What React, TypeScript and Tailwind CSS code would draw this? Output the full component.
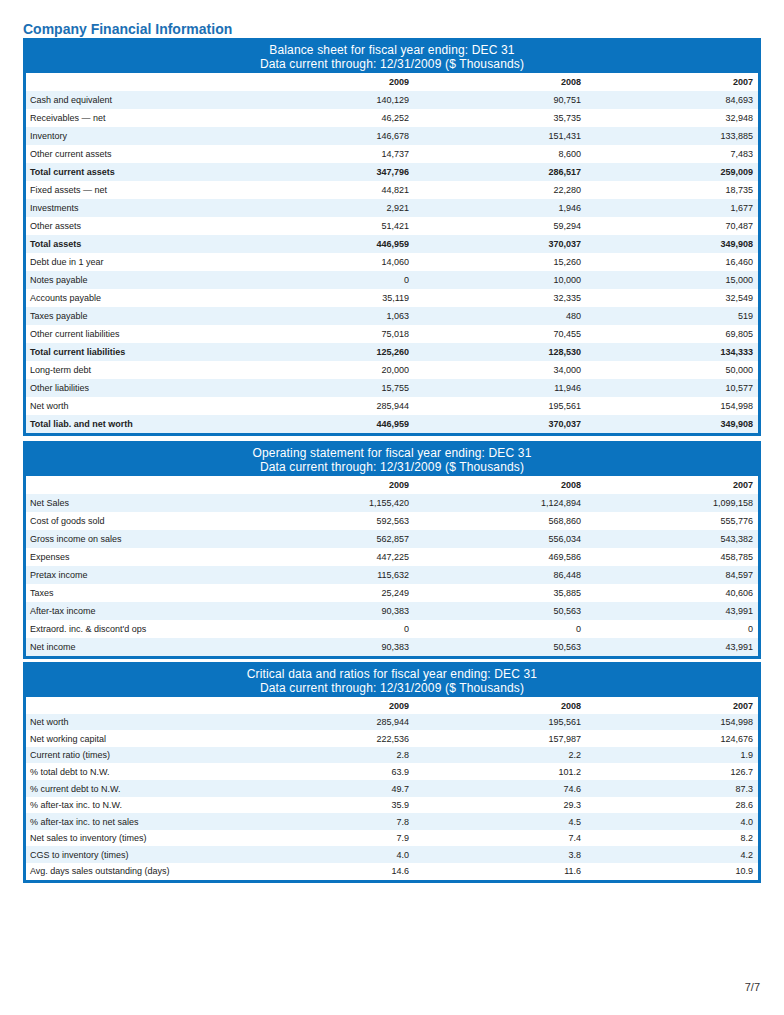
type Row = { label: string; values: string[]; bold?: boolean };

interface SectionProps {
  title: string;
  rows: Row[];
  rowH: string;
  className?: string;
}

const years = ["2009", "2008", "2007"];

const balance: Row[] = [
  { label: "Cash and equivalent", values: ["140,129", "90,751", "84,693"] },
  { label: "Receivables — net", values: ["46,252", "35,735", "32,948"] },
  { label: "Inventory", values: ["146,678", "151,431", "133,885"] },
  { label: "Other current assets", values: ["14,737", "8,600", "7,483"] },
  { label: "Total current assets", values: ["347,796", "286,517", "259,009"], bold: true },
  { label: "Fixed assets — net", values: ["44,821", "22,280", "18,735"] },
  { label: "Investments", values: ["2,921", "1,946", "1,677"] },
  { label: "Other assets", values: ["51,421", "59,294", "70,487"] },
  { label: "Total assets", values: ["446,959", "370,037", "349,908"], bold: true },
  { label: "Debt due in 1 year", values: ["14,060", "15,260", "16,460"] },
  { label: "Notes payable", values: ["0", "10,000", "15,000"] },
  { label: "Accounts payable", values: ["35,119", "32,335", "32,549"] },
  { label: "Taxes payable", values: ["1,063", "480", "519"] },
  { label: "Other current liabilities", values: ["75,018", "70,455", "69,805"] },
  { label: "Total current liabilities", values: ["125,260", "128,530", "134,333"], bold: true },
  { label: "Long-term debt", values: ["20,000", "34,000", "50,000"] },
  { label: "Other liabilities", values: ["15,755", "11,946", "10,577"] },
  { label: "Net worth", values: ["285,944", "195,561", "154,998"] },
  { label: "Total liab. and net worth", values: ["446,959", "370,037", "349,908"], bold: true },
];

const operating: Row[] = [
  { label: "Net Sales", values: ["1,155,420", "1,124,894", "1,099,158"] },
  { label: "Cost of goods sold", values: ["592,563", "568,860", "555,776"] },
  { label: "Gross income on sales", values: ["562,857", "556,034", "543,382"] },
  { label: "Expenses", values: ["447,225", "469,586", "458,785"] },
  { label: "Pretax income", values: ["115,632", "86,448", "84,597"] },
  { label: "Taxes", values: ["25,249", "35,885", "40,606"] },
  { label: "After-tax income", values: ["90,383", "50,563", "43,991"] },
  { label: "Extraord. inc. & discont'd ops", values: ["0", "0", "0"] },
  { label: "Net income", values: ["90,383", "50,563", "43,991"] },
];

const ratios: Row[] = [
  { label: "Net worth", values: ["285,944", "195,561", "154,998"] },
  { label: "Net working capital", values: ["222,536", "157,987", "124,676"] },
  { label: "Current ratio (times)", values: ["2.8", "2.2", "1.9"] },
  { label: "% total debt to N.W.", values: ["63.9", "101.2", "126.7"] },
  { label: "% current debt to N.W.", values: ["49.7", "74.6", "87.3"] },
  { label: "% after-tax inc. to N.W.", values: ["35.9", "29.3", "28.6"] },
  { label: "% after-tax inc. to net sales", values: ["7.8", "4.5", "4.0"] },
  { label: "Net sales to inventory (times)", values: ["7.9", "7.4", "8.2"] },
  { label: "CGS to inventory (times)", values: ["4.0", "3.8", "4.2"] },
  { label: "Avg. days sales outstanding (days)", values: ["14.6", "11.6", "10.9"] },
];

const Section = ({ title, rows, rowH, className = "" }: SectionProps) => {
  return (
    <div className={`bg-[#0b73bf] p-[3px] ${className}`}>
      <div className="pt-[2px] pb-[2px] text-center text-[12px] leading-[14px] tracking-[0.15px] text-white">
        <div>{title} for fiscal year ending: DEC 31</div>
        <div>Data current through: 12/31/2009 ($ Thousands)</div>
      </div>
      <div className="bg-white text-[9px] text-[#222]">
        <div className={`grid grid-cols-[216px_172px_172px_172px] items-center pt-[2px] font-bold ${rowH}`}>
          <div />
          {years.map((y) => (
            <div key={y} className="pr-[5px] text-right">
              {y}
            </div>
          ))}
        </div>
        {rows.map((r, i) => (
          <div
            key={r.label}
            className={`grid grid-cols-[216px_172px_172px_172px] items-center pt-[2px] ${rowH} ${
              i % 2 === 0 ? "bg-[#e7f3fb]" : "bg-white"
            } ${r.bold ? "font-bold" : ""}`}
          >
            <div className="pl-[4px]">{r.label}</div>
            {r.values.map((v, j) => (
              <div key={j} className="pr-[5px] text-right">
                {v}
              </div>
            ))}
          </div>
        ))}
      </div>
    </div>
  );
};

export default function App() {
  return (
    <div className="relative h-[1015px] w-[784px] bg-white px-[23px] pt-[21px] font-['Liberation_Sans',Arial,sans-serif]">
      <h1 className="mb-[1px] text-[14px] leading-[16px] font-bold text-[#1b6fb4]">
        Company Financial Information
      </h1>
      <div className="w-[738px]">
        <Section title="Balance sheet" rows={balance} rowH="h-[18px]" />
        <Section title="Operating statement" rows={operating} rowH="h-[18px]" className="mt-[5px]" />
        <Section
          title="Critical data and ratios"
          rows={ratios}
          rowH="h-[16.6px]"
          className="mt-[3px]"
        />
      </div>
      <div className="absolute right-[24px] bottom-[20px] text-[11px] text-[#333]">7/7</div>
    </div>
  );
}
